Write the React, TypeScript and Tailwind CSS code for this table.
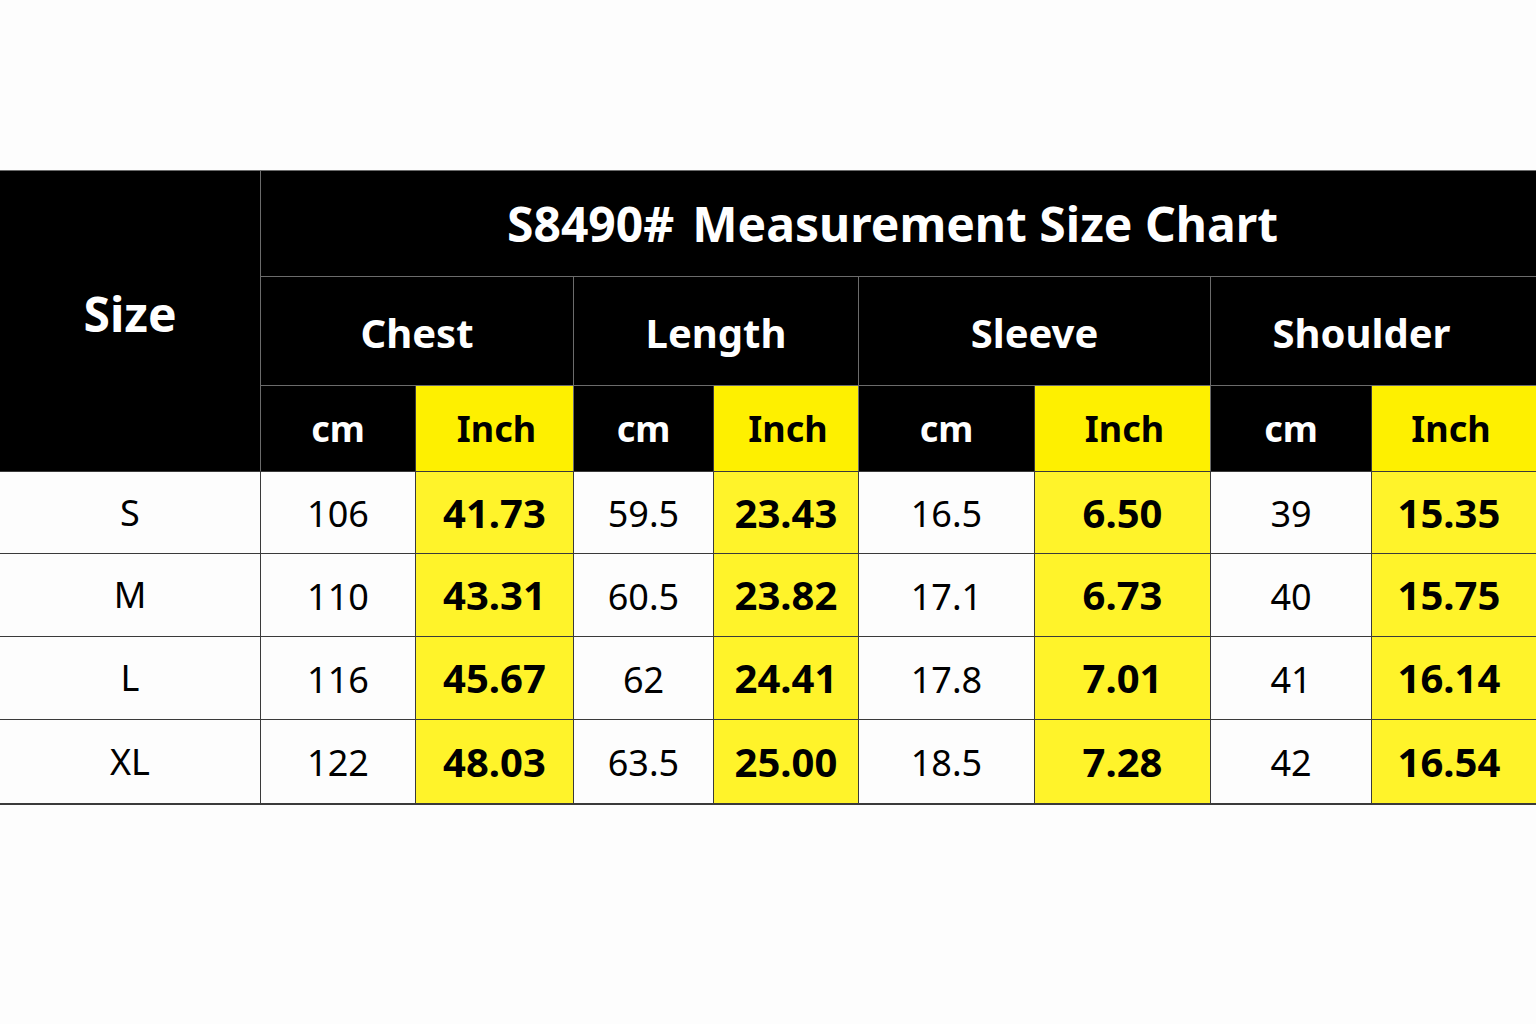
const cols = ["Chest", "Length", "Sleeve", "Shoulder"];

const rows = [
  { size: "S", v: ["106", "41.73", "59.5", "23.43", "16.5", "6.50", "39", "15.35"] },
  { size: "M", v: ["110", "43.31", "60.5", "23.82", "17.1", "6.73", "40", "15.75"] },
  { size: "L", v: ["116", "45.67", "62", "24.41", "17.8", "7.01", "41", "16.14"] },
  { size: "XL", v: ["122", "48.03", "63.5", "25.00", "18.5", "7.28", "42", "16.54"] },
];

export default function App() {
  return (
    <div
      className="w-[1536px] h-[1024px] bg-[#fdfdfd] pt-[170px]"
      style={{ fontFamily: "'Noto Sans', 'Open Sans', sans-serif" }}
    >
      <div className="grid grid-cols-[260px_155px_158px_140px_145px_176px_176px_161px_165px] grid-rows-[106px_109px_85px_82px_83px_83px_84px] border-t border-[#6b6b6b]">
        {/* Encabezado */}
        <div className="row-span-3 bg-black text-white font-bold text-[48px] flex items-center justify-center pb-[14px]">
          Size
        </div>
        <div className="col-span-8 bg-black text-white font-bold text-[48px] flex items-center justify-center gap-[18px] border-l border-b border-[#6b6b6b] pr-[12px]">
          <span>S8490#</span>
          <span>Measurement Size Chart</span>
        </div>
        {cols.map((c, i) => (
          <div
            key={c}
            className={`col-span-2 bg-black text-white font-bold text-[40px] flex items-center justify-center border-l border-b border-[#6b6b6b] pt-[4px] ${
              i === 3 ? "pr-[24px]" : ""
            }`}
          >
            {c}
          </div>
        ))}
        {cols.map((c, i) => [
          <div
            key={c + "cm"}
            className="bg-black text-white font-bold text-[36px] flex items-center justify-center border-l border-[#6b6b6b]"
          >
            cm
          </div>,
          <div
            key={c + "in"}
            className={`bg-[#fef000] text-black font-bold text-[36px] flex items-center justify-center border-l border-[#3a3a3a] ${
              i === 3 ? "pr-[6px]" : "pl-[4px]"
            }`}
          >
            Inch
          </div>,
        ])}

        {/* Filas */}
        {rows.map((r) => [
          <div
            key={r.size}
            className="bg-[#fdfdfd] text-black text-[36px] flex items-center justify-center border-t border-[#3a3a3a]"
          >
            {r.size}
          </div>,
          ...r.v.map((v, i) =>
            i % 2 === 0 ? (
              <div
                key={r.size + i}
                className="bg-[#fdfdfd] text-black text-[36px] flex items-center justify-center border-l border-t border-[#3a3a3a] pt-[3px]"
              >
                {v}
              </div>
            ) : (
              <div
                key={r.size + i}
                className={`bg-[#fff32a] text-black font-bold text-[40px] flex items-center justify-center border-l border-t border-[#3a3a3a] ${
                  i === 7 ? "pr-[10px]" : ""
                }`}
              >
                {v}
              </div>
            )
          ),
        ])}
      </div>
      <div className="h-[2px] bg-[#3a3a3a]" />
    </div>
  );
}
